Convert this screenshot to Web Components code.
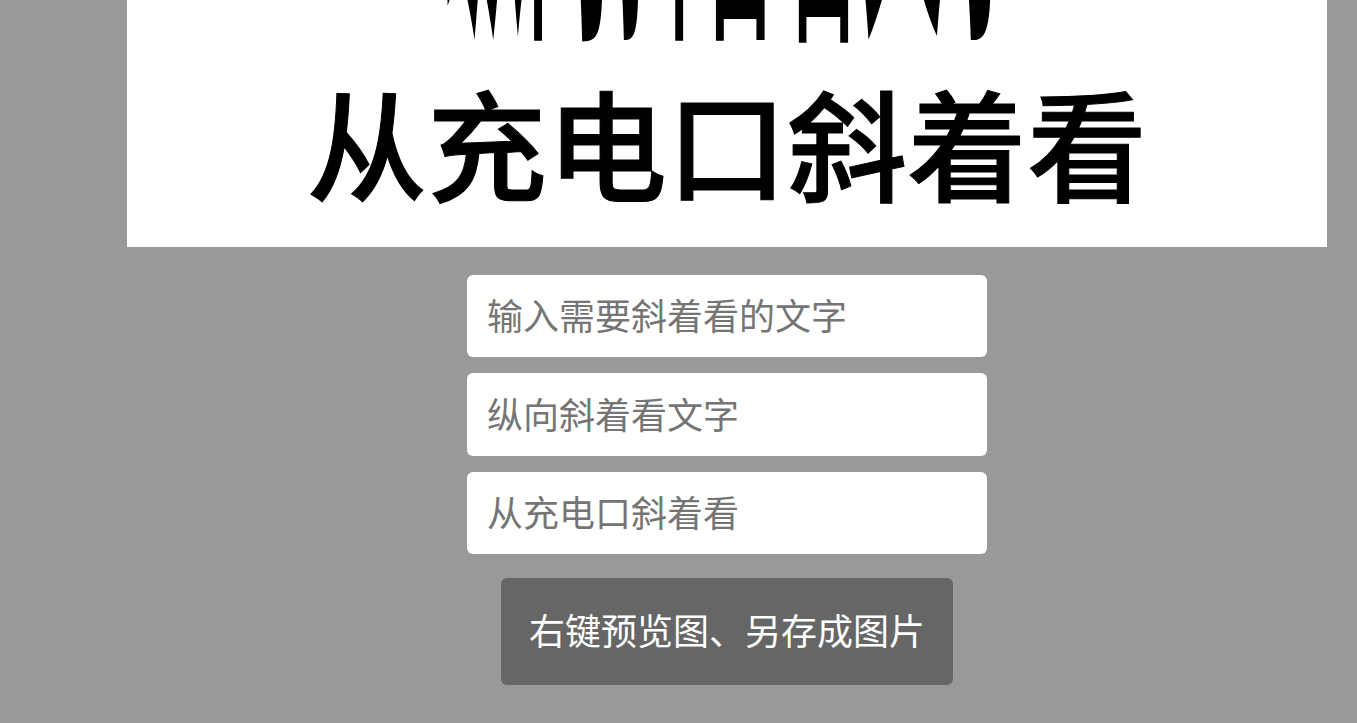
<!DOCTYPE html>
<html lang="zh"><head><meta charset="utf-8"><style>
html,body{margin:0;height:723px;overflow:hidden;background:#999}
body{font-family:"Noto Sans CJK SC","Noto Sans",sans-serif}
</style></head><body>
<app-page>
<preview-canvas slanted="纵向斜着看文字" title-text="从充电口斜着看"></preview-canvas>
<text-field>输入需要斜着看的文字</text-field>
<text-field>纵向斜着看文字</text-field>
<text-field>从充电口斜着看</text-field>
<action-button>右键预览图、另存成图片</action-button>
</app-page>
<script>
class Base extends HTMLElement{
  constructor(html){super();this.attachShadow({mode:'open'}).innerHTML=html;}
}
customElements.define('app-page',class extends Base{constructor(){super(`<style>
:host{display:flex;flex-direction:column;align-items:center;width:1200px;margin-left:127px}
</style><slot></slot>`)}});
customElements.define('preview-canvas',class extends Base{
  constructor(){super(`<style>
:host{display:block;position:relative;width:1200px;height:247px;background:#fff;overflow:hidden;color:#000;margin-bottom:28px}
.s{position:absolute;left:318px;bottom:214px;width:581px;font-size:83px;line-height:83px;font-weight:500;white-space:nowrap;
   transform-origin:50% 100%;transform:scale(1.008,8)}
.t{position:absolute;left:0;right:0;top:66px;text-align:center;font-size:120px;line-height:150px;font-weight:500;white-space:nowrap;-webkit-text-stroke:1px #000}
</style><div class="s" id="s"></div><div class="t" id="t"></div>`)}
  connectedCallback(){this.shadowRoot.getElementById('s').textContent=this.getAttribute('slanted');
    this.shadowRoot.getElementById('t').textContent=this.getAttribute('title-text');}
});
customElements.define('text-field',class extends Base{constructor(){super(`<style>
:host{display:flex;align-items:center;box-sizing:border-box;width:520px;height:82.4px;margin-bottom:16px;padding:0 20px 4px;background:#fff;border-radius:6px;color:#757575;font-size:36px;white-space:nowrap}
</style><slot></slot>`)}});
customElements.define('action-button',class extends Base{constructor(){super(`<style>
:host{display:flex;align-items:center;justify-content:center;box-sizing:border-box;width:452px;height:107px;margin-top:7.8px;padding-bottom:4px;background:#666;border-radius:6px;color:#fff;font-size:36px;white-space:nowrap}
</style><slot></slot>`)}});
</script></body></html>
